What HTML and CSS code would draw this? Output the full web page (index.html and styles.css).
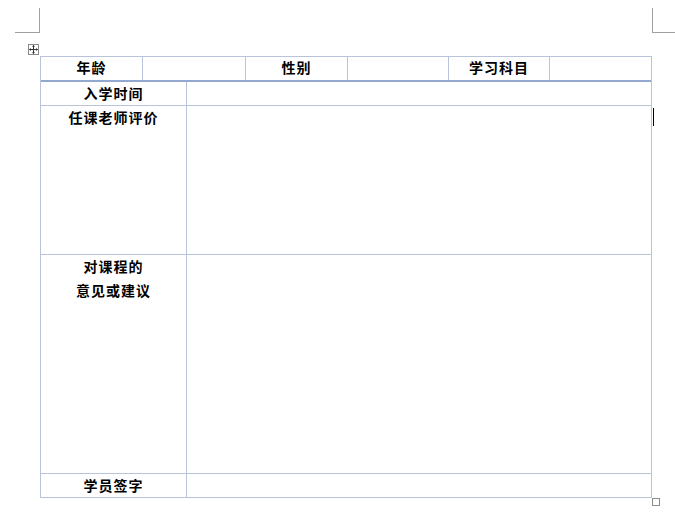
FILE: index.html
```html
<!DOCTYPE html>
<html lang="zh">
<head>
<meta charset="utf-8">
<link rel="stylesheet" href="styles.css">
</head>
<body>
<div class="page">
  <div class="marks">
    <div class="mark mark-left"></div>
    <div class="mark mark-right"></div>
  </div>
  <div class="table">
    <div class="move-handle">
      <svg width="9" height="9" viewBox="0 0 9 9">
        <path d="M4.5 0.5 V8.5 M0.5 4.5 H8.5" stroke="#333" stroke-width="1" fill="none"/>
        <path d="M4.5 0 L3 1.8 H6 Z M4.5 9 L3 7.2 H6 Z M0 4.5 L1.8 3 V6 Z M9 4.5 L7.2 3 V6 Z" fill="#333"/>
      </svg>
    </div>
    <div class="row-top">
      <div class="cell">年龄</div>
      <div class="cell"></div>
      <div class="cell">性别</div>
      <div class="cell"></div>
      <div class="cell">学习科目</div>
      <div class="cell last"></div>
    </div>
    <div class="row r-short">
      <div class="label">入学时间</div>
      <div class="value"></div>
    </div>
    <div class="row r-eval">
      <div class="label">任课老师评价</div>
      <div class="value"></div>
    </div>
    <div class="row r-advice">
      <div class="label"><div class="txt">对课程的<br>意见或建议</div></div>
      <div class="value"></div>
    </div>
    <div class="row r-short r-last">
      <div class="label">学员签字</div>
      <div class="value"></div>
    </div>
    <div class="cursor"></div>
    <div class="resize-handle"></div>
  </div>
</div>
</body>
</html>
```

FILE: styles.css
```css
* { box-sizing: border-box; }
html, body {
  margin: 0;
  padding: 0;
  background: #ffffff;
}
body {
  font-family: "Noto Sans CJK SC", "Liberation Sans", sans-serif;
  color: #000;
  width: 675px;
  height: 512px;
  overflow: hidden;
}
.page {
  padding-top: 8px;
}
.marks {
  display: flex;
  justify-content: space-between;
  height: 48px;
}
.mark {
  width: 25px;
  height: 25px;
  border-bottom: 1px solid #a0a0a0;
}
.mark-left {
  margin-left: 15px;
  border-right: 1px solid #a0a0a0;
}
.mark-right {
  width: 23px;
  border-left: 1px solid #a0a0a0;
}
.table {
  position: relative;
  margin-left: 40px;
  width: 612px;
  border: 1px solid #b9c4da;
}
.move-handle {
  position: absolute;
  left: -13px;
  top: -13px;
  width: 11px;
  height: 11px;
  border: 1px solid #8a8a8a;
  display: flex;
  align-items: center;
  justify-content: center;
  background: #fff;
}
.move-handle svg { display: block; }
.resize-handle {
  position: absolute;
  right: -9px;
  bottom: -9px;
  width: 8px;
  height: 8px;
  border: 1px solid #8a8a8a;
  background: #fff;
}
.cursor {
  position: absolute;
  left: 612px;
  top: 51px;
  width: 1px;
  height: 18px;
  background: #000;
}
.row-top {
  display: grid;
  grid-template-columns: 102px 103px 102px 101px 101px 101px;
  height: 25px;
  border-bottom: 2px solid #92a8cf;
}
.cell, .label {
  font-size: 14px;
  font-weight: bold;
  letter-spacing: 1px;
  text-align: center;
}
.cell {
  line-height: 21px;
  border-right: 1px solid #b9c4da;
}
.cell.last { border-right: none; }
.row {
  display: grid;
  grid-template-columns: 146px 464px;
  border-bottom: 1px solid #b9c4da;
}
.row.r-last { border-bottom: none; }
.label {
  border-right: 1px solid #b9c4da;
  line-height: 22px;
}
.r-short { height: 24px; }
.r-short.r-last { height: 23px; }
.r-eval { height: 149px; }
.r-advice { height: 219px; }
.r-advice .label { line-height: 24px; }
.r-advice .txt { margin-top: -1px; }
```
